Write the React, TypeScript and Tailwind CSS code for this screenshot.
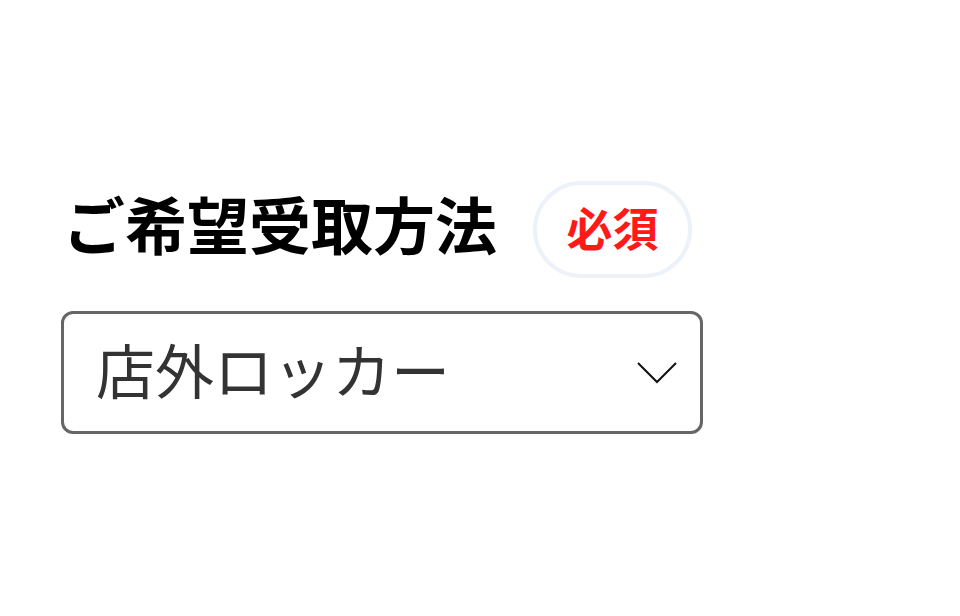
export default function App() {
  return (
    <div
      className="min-h-[616px] w-[960px] bg-white pl-[61px] pt-[181px]"
      style={{ fontFamily: '"Noto Sans CJK JP", "Noto Sans", sans-serif' }}
    >
      <div className="flex items-center">
        <h2 className="ml-[2px] pb-[13px] text-[62px] font-bold leading-none text-black">ご希望受取方法</h2>
        <span className="ml-[36px] flex h-[97px] w-[159px] items-center justify-center rounded-full border-[4px] border-[#edf2f8] pb-[8px] text-[46px] font-bold leading-none text-[#ff1a1a]">
          必須
        </span>
      </div>
      <div className="mt-[33px] flex h-[123px] w-[642px] items-center justify-between rounded-[12px] border-[3px] border-[#666666] pl-[32px] pr-[22px]">
        <span className="pb-[8px] text-[59px] leading-none text-[#333333]">店外ロッカー</span>
        <svg width="42" height="24" viewBox="0 0 42 24" fill="none" stroke="#111" strokeWidth="2">
          <path d="M2 2 L21 21 L40 2" />
        </svg>
      </div>
    </div>
  );
}
